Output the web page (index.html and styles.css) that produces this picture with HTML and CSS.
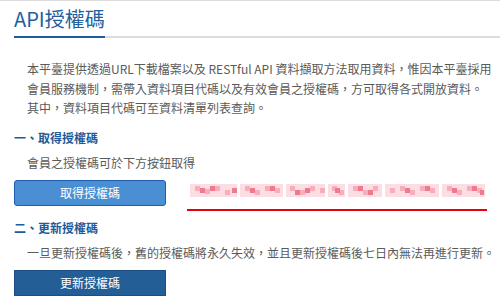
FILE: index.html
```html
<!DOCTYPE html>
<html lang="zh-Hant">
<head>
<meta charset="utf-8">
<link rel="stylesheet" href="styles.css">
</head>
<body>
<div class="page">
  <div class="title-wrap">
    <h1 class="title">API授權碼</h1>
  </div>
  <p class="intro">本平臺提供透過URL下載檔案以及 RESTful API 資料擷取方法取用資料，惟因本平臺採用<br>會員服務機制，需帶入資料項目代碼以及有效會員之授權碼，方可取得各式開放資料。<br>其中，資料項目代碼可至資料清單列表查詢。</p>
  <h2 class="section">一、取得授權碼</h2>
  <p class="desc">會員之授權碼可於下方按鈕取得</p>
  <div class="action-row">
    <button class="btn btn-light">取得授權碼</button>
    <div class="token">
      <svg class="mosaic" width="300" height="18" viewBox="0 0 300 18" aria-label="授權碼（已遮蔽）">
        <g fill="#fcdde3">
          <rect x="3" y="2" width="47" height="13"/>
          <rect x="53" y="2" width="43" height="13"/>
          <rect x="99" y="2" width="39" height="13"/>
          <rect x="141" y="2" width="17" height="13"/>
          <rect x="161" y="2" width="34" height="13"/>
          <rect x="198" y="2" width="54" height="13"/>
          <rect x="255" y="2" width="43" height="13"/>
        </g>
        <g fill="#f7aebb">
          <rect x="8" y="4" width="5" height="5"/><rect x="18" y="7" width="5" height="5"/>
          <rect x="28" y="4" width="5" height="5"/><rect x="38" y="8" width="5" height="5"/>
          <rect x="58" y="4" width="5" height="5"/><rect x="68" y="8" width="5" height="5"/>
          <rect x="78" y="4" width="5" height="5"/><rect x="88" y="6" width="5" height="5"/>
          <rect x="103" y="4" width="5" height="5"/><rect x="113" y="8" width="5" height="5"/>
          <rect x="123" y="4" width="5" height="5"/><rect x="133" y="6" width="5" height="5"/>
          <rect x="145" y="4" width="5" height="5"/><rect x="152" y="8" width="5" height="5"/>
          <rect x="166" y="4" width="5" height="5"/><rect x="176" y="8" width="5" height="5"/>
          <rect x="186" y="4" width="5" height="5"/><rect x="203" y="6" width="5" height="5"/>
          <rect x="213" y="4" width="5" height="5"/><rect x="223" y="8" width="5" height="5"/>
          <rect x="233" y="4" width="5" height="5"/><rect x="243" y="6" width="5" height="5"/>
          <rect x="260" y="4" width="5" height="5"/><rect x="270" y="8" width="5" height="5"/>
          <rect x="280" y="4" width="5" height="5"/><rect x="290" y="6" width="5" height="5"/>
        </g>
        <g fill="#f07a8d">
          <rect x="13" y="6" width="5" height="5"/><rect x="23" y="4" width="5" height="5"/>
          <rect x="45" y="6" width="5" height="5"/><rect x="63" y="6" width="5" height="5"/>
          <rect x="83" y="4" width="5" height="5"/><rect x="108" y="8" width="5" height="5"/>
          <rect x="118" y="6" width="5" height="5"/><rect x="148" y="6" width="5" height="5"/>
          <rect x="171" y="4" width="5" height="5"/><rect x="181" y="8" width="5" height="5"/>
          <rect x="218" y="6" width="5" height="5"/><rect x="238" y="4" width="5" height="5"/>
          <rect x="265" y="6" width="5" height="5"/><rect x="285" y="4" width="5" height="5"/>
          <rect x="293" y="8" width="4" height="5"/>
        </g>
      </svg>
    </div>
  </div>
  <h2 class="section">二、更新授權碼</h2>
  <p class="desc">一旦更新授權碼後，舊的授權碼將永久失效，並且更新授權碼後七日內無法再進行更新。</p>
  <div class="action-row">
    <button class="btn btn-dark">更新授權碼</button>
  </div>
</div>
</body>
</html>
```
FILE: styles.css
```css
html, body {
  margin: 0;
  padding: 0;
  background: #fff;
}
body {
  width: 500px;
  height: 306px;
  overflow: hidden;
  font-family: "Noto Sans CJK TC", "Noto Sans", sans-serif;
  color: #5a5a5a;
}
.page {
  border-top: 1px solid #dcdcdc;
}
.title-wrap {
  margin-left: 14px;
  border-bottom: 2px solid #dcdcdc;
  display: flex;
}
.title {
  margin: 0 0 -2px 0;
  padding: 4px 0 3px 0;
  font-size: 20px;
  line-height: 28px;
  font-weight: 400;
  color: #2260a0;
  border-bottom: 2px solid #1f5b99;
}
.intro {
  margin: 21px 0 0 0;
  padding-left: 27px;
  font-size: 12px;
  line-height: 19.5px;
  white-space: nowrap;
}
.section {
  margin: 10px 0 0 14px;
  font-size: 12px;
  line-height: 20px;
  font-weight: 700;
  color: #1f5b99;
}
.desc {
  margin: 5px 0 0 0;
  padding-left: 27px;
  font-size: 12px;
  line-height: 20px;
  white-space: nowrap;
}
.action-row {
  display: flex;
  align-items: flex-start;
  gap: 21px;
  margin: 7px 0 0 14px;
}
.btn {
  width: 152px;
  height: 26px;
  padding: 0;
  font-family: "Noto Sans CJK TC", "Noto Sans", sans-serif;
  font-size: 12px;
  color: #fff;
  cursor: pointer;
}
.btn-light {
  background: #4a8fd4;
  border: 1px solid #1d5cae;
  border-radius: 3px;
}
.btn-dark {
  background: #245e97;
  border: 1px solid #1b4f84;
  border-radius: 0;
}
.action-row + .section {
  margin-top: 12px;
}
.token {
  width: 300px;
  height: 31px;
  margin-bottom: -5px;
  border-bottom: 2px solid #e8000b;
  box-sizing: border-box;
  padding-top: 2px;
}
.mosaic {
  display: block;
}
```
